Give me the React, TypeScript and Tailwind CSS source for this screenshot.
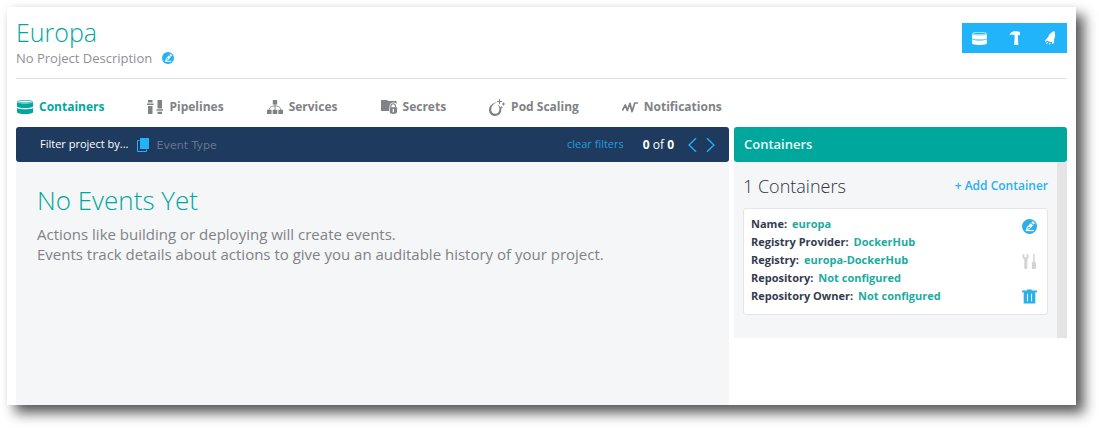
import React from "react";

type IconProps = { className?: string };

function StackIcon({ className = "" }: IconProps) {
  return (
    <svg viewBox="0 0 16 14" className={className} fill="currentColor" aria-hidden="true">
      <ellipse cx="8" cy="1.600" rx="7.600" ry="1.200" fill="none" stroke="currentColor" strokeWidth="0.700" />
      <path d="M0 2.300c2 1 5 1.300 8 1.300s6-.3 8-1.300v4.300c0 .9-3.500 1.500-8 1.500S0 7.500 0 6.600z" />
      <path d="M0 7.900c2 1 5 1.300 8 1.300s6-.3 8-1.300v4.300c0 1-3.500 1.800-8 1.800s-8-.8-8-1.800z" />
    </svg>
  );
}

function PipelineIcon({ className = "" }: IconProps) {
  return (
    <svg viewBox="0 0 16 14" className={className} fill="currentColor" aria-hidden="true">
      <path d="M1 0h4.500v2.500H1zM0 3.500h6.500V5H0zM1 6h4.500v8H1zM10.500 0H15v8.500h-4.500zM9.500 9.300H16v1.500H9.500zM10.500 11.700H15V14h-4.500z" />
    </svg>
  );
}

function ServicesIcon({ className = "" }: IconProps) {
  return (
    <svg viewBox="0 0 16 14" className={className} fill="currentColor" aria-hidden="true">
      <path d="M5.800 0h4.400v4.400H5.800zM0 9.800h4.600V14H0zM5.700 9.800h4.600V14H5.700zM11.400 9.800H16V14h-4.600z" />
      <path d="M8 4v6M2.300 10C2.300 7.500 4 6 8 6s5.700 1.500 5.700 4" fill="none" stroke="currentColor" strokeWidth="0.900" />
    </svg>
  );
}

function SecretsIcon({ className = "" }: IconProps) {
  return (
    <svg viewBox="0 0 16 14" className={className} fill="currentColor" aria-hidden="true">
      <path d="M0 0h6l1 1h8.500v3.200C14.500 3 13.500 2.600 12.300 2.600 10 2.600 8.600 4.200 8.600 6.200v1L8 8v3H0z" />
      <path d="M9.900 7.500V6c0-3 4.500-3 4.500 0v1.500" fill="none" stroke="currentColor" strokeWidth="1.100" />
      <path fillRule="evenodd" d="M8.700 7.300H16V12c0 1.300-1.500 2-3.650 2S8.700 13.300 8.700 12zM11.700 9v3.200h1.300V9z" />
    </svg>
  );
}

function PodIcon({ className = "" }: IconProps) {
  return (
    <svg viewBox="0 0 16 17" className={className} fill="none" stroke="currentColor" aria-hidden="true">
      <path fill="currentColor" stroke="none" fillRule="evenodd" d="M8 3C3.200 4 0 7.200 0 11c0 3.600 2.500 6 6 6s6.300-2.400 6.300-5.700c0-2.600-1.300-4.500-3.800-5.600 1.200 1.300 1.900 2.800 1.900 4.500 0 2.700-1.700 4.500-4.100 4.500S2.200 13 2.200 10.400C2.200 7.200 4.600 4.600 8 3z" />
      <path d="M10.500 0v5M8 2.500h5M14.500 3.500v3M13 5h3M12.500 7.500v2M11.500 8.500h2" />
    </svg>
  );
}

function PulseIcon({ className = "" }: IconProps) {
  return (
    <svg viewBox="0 0 16 12" className={className} fill="none" stroke="currentColor" strokeWidth="1.700" strokeLinejoin="round" aria-hidden="true">
      <path d="M0.300 9.500 3.300 4l2 5.500L8 2.300l2 8.400L12.800 2H16" />
    </svg>
  );
}

function EditIcon({ className = "" }: IconProps) {
  return (
    <svg viewBox="0 0 16 16" className={className} aria-hidden="true">
      <circle cx="8" cy="8" r="8" fill="currentColor" />
      <path d="M4 12.300h8.500" fill="none" stroke="white" strokeWidth="1.300" />
      <path fillRule="evenodd" d="M10 3.700 11.300 2.200l2.500 2.200-1.300 1.500zM9.300 4.400l2.600 2.300-4 4.300-3.700 1 1-3.400zM6.300 9l-.5 1.500 1.500-.4 1.200-1.300-1-.9z" fill="white" />
    </svg>
  );
}

function HammerIcon({ className = "" }: IconProps) {
  return (
    <svg viewBox="0 0 12 14" className={className} fill="currentColor" aria-hidden="true">
      <path d="M0.500 4.500C1 1.800 2.800.4 5 .2h3.800l.5.600H11v3.500H9.300L8.800 3.600 9.300 14H5.200l.5-9.600C4 3 2 3.200.5 4.500z" />
    </svg>
  );
}

function RocketIcon({ className = "" }: IconProps) {
  return (
    <svg viewBox="0 0 12 14" className={className} fill="currentColor" aria-hidden="true">
      <path d="M10.300 0C7.200 1.200 5 3.300 4.100 6L1.300 9.200 1 11.300l2.700-1.800 1 .9 2.300.7.900-.1.400 2.500 1.900-2.200-.2-3C11.500 6 11.500 2.600 10.300 0zM3 11l-1.300 2.500 2.700-1.800zM5.600 11.700 4.700 14l2.400-2z" />
    </svg>
  );
}

function CopyIcon({ className = "" }: IconProps) {
  return (
    <svg viewBox="0 0 12 14" className={className} aria-hidden="true">
      <path d="M2.500 2.500h-2v11h9v-2" fill="none" stroke="currentColor" />
      <path d="M3 0h9v11H3z" fill="currentColor" />
    </svg>
  );
}

function ToolsIcon({ className = "" }: IconProps) {
  return (
    <svg viewBox="0 0 14 15" className={className} fill="currentColor" aria-hidden="true">
      <path d="M0 0.500 1.800 0v3.200h2.400V0L6 .5v3.200L4.800 5.500V14c0 1.300-3 1.300-3 0V5.500L0 3.700z" />
      <path d="M10.700 0h1.400v7.500l1.300 1.300V15H9.400V8.800l1.300-1.300z" />
    </svg>
  );
}

function TrashIcon({ className = "" }: IconProps) {
  return (
    <svg viewBox="0 0 16 15" className={className} fill="currentColor" aria-hidden="true">
      <path fillRule="evenodd" d="M5.500 0h5v1H16v2h-1.800v12H1.800V3H0V1h5.500zM5.300 4.500v8h1v-8zM9.700 4.500v8h1v-8z" />
    </svg>
  );
}

function Chevron({ d }: { d: string }) {
  return (
    <svg viewBox="0 0 9 15" className="h-4 w-[9px]" fill="none" stroke="currentColor" strokeWidth="1.300" aria-hidden="true">
      <path d={d} />
    </svg>
  );
}

const tabs = [
  { label: "Containers", icon: StackIcon, size: "h-[14px] w-4", active: true },
  { label: "Pipelines", icon: PipelineIcon, size: "h-[14px] w-4", active: false },
  { label: "Services", icon: ServicesIcon, size: "h-[14px] w-4", active: false },
  { label: "Secrets", icon: SecretsIcon, size: "h-[14px] w-4", active: false },
  { label: "Pod Scaling", icon: PodIcon, size: "h-[17px] w-4", active: false },
  { label: "Notifications", icon: PulseIcon, size: "h-3 w-4", active: false },
];

const details = [
  ["Name:", "europa"],
  ["Registry Provider:", "DockerHub"],
  ["Registry:", "europa-DockerHub"],
  ["Repository:", "Not configured"],
  ["Repository Owner:", "Not configured"],
];

export default function App() {
  return (
    <div className="flex min-h-screen flex-col bg-white pt-[7px] pr-[23px] pb-[23px] pl-[7px] font-['Open_Sans',sans-serif]">
      <div className="flex flex-1 flex-col bg-white px-[9px] shadow-[8px_8px_12px_rgba(0,0,0,0.65),0_0_6px_rgba(0,0,0,0.04)]">
        <header className="flex items-start justify-between border-b border-[#e2e2e2] pt-2 pb-3">
          <div>
            <h1 className="text-[25px] leading-[35px] font-light text-[#00a79d]">Europa</h1>
            <div className="flex items-center gap-[10px] text-[13px] leading-4 text-[#8d9097]">
              <p>No Project Description</p>
              <button aria-label="Edit description" className="text-[#22b1f4]">
                <EditIcon className="size-3" />
              </button>
            </div>
          </div>
          <div className="mt-2 flex h-[30px] bg-[#22b4fa] text-white">
            <button aria-label="Containers" className="flex w-[35px] items-center justify-center">
              <StackIcon className="h-[13px] w-[15px]" />
            </button>
            <button aria-label="Build" className="flex w-[35px] items-center justify-center">
              <HammerIcon className="h-[14px] w-3" />
            </button>
            <button aria-label="Deploy" className="flex w-[35px] items-center justify-center">
              <RocketIcon className="h-[14px] w-3" />
            </button>
          </div>
        </header>

        <nav className="flex h-12 items-center gap-[43px] pt-2 pl-px">
          {tabs.map(({ label, icon: Icon, size, active }) => (
            <a
              key={label}
              href="#"
              className={
                active
                  ? "flex items-center gap-[6px] text-xs font-bold text-[#00a79d]"
                  : "flex items-center gap-[6px] text-xs font-bold text-[#808285]"
              }
            >
              <Icon className={size} />
              {label}
            </a>
          ))}
        </nav>

        <main className="flex flex-1 gap-[5px]">
          <section className="flex flex-1 flex-col">
            <div className="flex h-[35px] items-center rounded-[3px] bg-[#1f3a5f] pr-[14px] pl-6 text-[11px] text-white">
              <label htmlFor="event-type">Filter project by...</label>
              <CopyIcon className="mr-[7px] ml-[9px] h-[14px] w-3 text-[#22b4fa]" />
              <input
                id="event-type"
                placeholder="Event Type"
                className="w-32 min-w-0 bg-transparent pt-[3px] font-['DejaVu_Sans',sans-serif] text-[11px] outline-none placeholder:text-[#66758c]"
              />
              <button className="ml-auto text-[#1f9fdc]">clear filters</button>
              <p className="mr-[14px] ml-[19px] text-xs">
                <b>0</b> of <b>0</b>
              </p>
              <div className="flex gap-[9px] text-[#22b4fa]">
                <button aria-label="Previous">
                  <Chevron d="M8 .8 1 7.500l7 6.700" />
                </button>
                <button aria-label="Next">
                  <Chevron d="M1 .8 8 7.500l-7 6.700" />
                </button>
              </div>
            </div>
            <div className="flex-1 bg-[#f5f6f8] px-[21px] pt-5">
              <h2 className="text-[26px] leading-9 font-light text-[#00a79d]">No Events Yet</h2>
              <p className="mt-[6px] text-[15px] leading-5 text-[#808285]">
                Actions like building or deploying will create events.
                <br />
                Events track details about actions to give you an auditable history of your project.
              </p>
            </div>
          </section>

          <aside className="w-[333px] shrink-0">
            <h2 className="flex h-[35px] items-center rounded-[3px] bg-[#00a79d] px-[10px] text-[13px] font-semibold text-[#e9faf5]">
              Containers
            </h2>
            <div className="border-r-[10px] border-[#e4e4e4] bg-[#f5f6f8] px-[9px] pt-3 pb-[23px]">
              <div className="flex items-center justify-between">
                <h3 className="text-lg leading-6 font-light text-[#2d3340]">1 Containers</h3>
                <button className="text-xs font-semibold text-[#2bb0ea]">+ Add Container</button>
              </div>
              <div className="mt-[10px] flex justify-between rounded-[3px] border border-[#e3e5e8] bg-white pt-[6px] pr-[10px] pb-[9px] pl-[7px]">
                <dl className="text-[11px] leading-[18px] font-bold">
                  {details.map(([term, value]) => (
                    <div key={term} className="flex gap-[5px]">
                      <dt className="text-[#333b4d]">{term}</dt>
                      <dd className="text-[#1cab9f]">{value}</dd>
                    </div>
                  ))}
                </dl>
                <div className="flex flex-col justify-between pt-1 pb-px">
                  <button aria-label="Edit container" className="text-[#2bb0ea]">
                    <EditIcon className="size-[15px]" />
                  </button>
                  <button aria-label="Configure container" className="text-[#d3d3d3]">
                    <ToolsIcon className="h-[15px] w-[15px]" />
                  </button>
                  <button aria-label="Delete container" className="text-[#2bb0ea]">
                    <TrashIcon className="h-[15px] w-[15px]" />
                  </button>
                </div>
              </div>
            </div>
          </aside>
        </main>
      </div>
    </div>
  );
}
